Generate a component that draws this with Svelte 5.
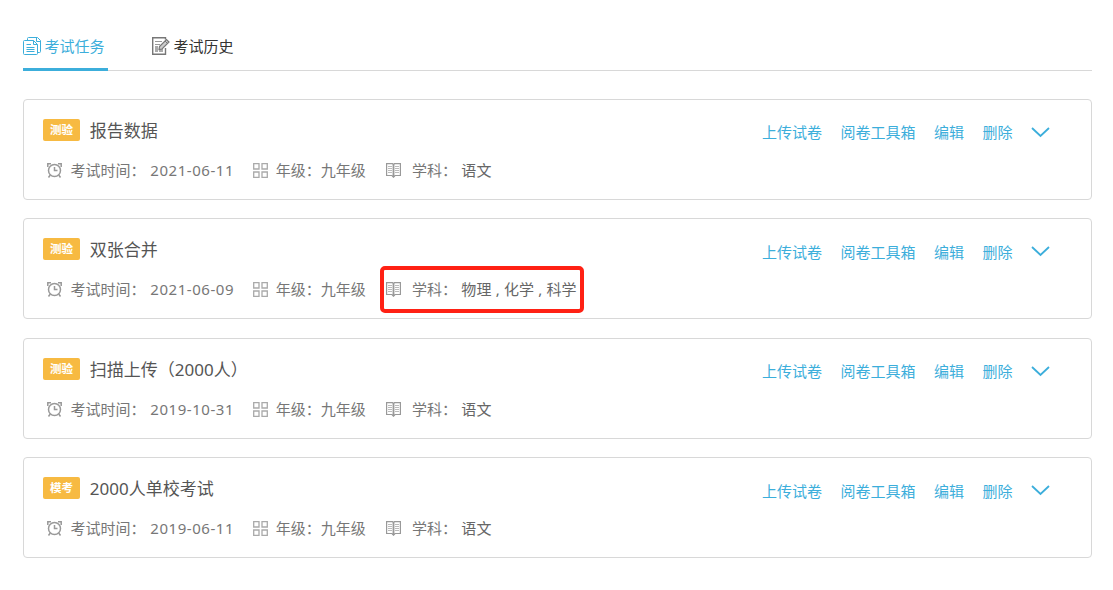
<script>
  const exams = [
    { tag: '测验', title: '报告数据', date: '2021-06-11', subjects: ['语文'] },
    { tag: '测验', title: '双张合并', date: '2021-06-09', subjects: ['物理', '化学', '科学'], marked: true },
    { tag: '测验', title: '扫描上传（2000人）', date: '2019-10-31', subjects: ['语文'] },
    { tag: '模考', title: '2000人单校考试', date: '2019-06-11', subjects: ['语文'] }
  ];
  const actions = ['上传试卷', '阅卷工具箱', '编辑', '删除'];
</script>

<main>
  <nav>
    <a class="tab active" href="#tasks">
      <svg width="19" height="19" viewBox="0 0 19 19" fill="none" stroke="currentColor">
        <path d="M4.5 3.5V1.5Q4.5 .5 5.5 .5H14.5L17.5 3.5V14.5Q17.5 15.5 16.5 15.5H14.5" />
        <path d="M1.5 3.5H10.5L14.5 7.5V16.5Q14.5 17.5 13.5 17.5H1.5Q.5 17.5 .5 16.5V4.5Q.5 3.5 1.5 3.5Z" />
        <path d="M10.5 3.5V7.5H14.5M13.5 .5V4.5H17.5M3.5 7.5H8M3.5 10.5H11.5M3.5 12.5H11.5M3.5 14.5H11.5" />
      </svg>
      <span>考试任务</span>
    </a>
    <a class="tab" href="#history">
      <svg width="18" height="18" viewBox="0 0 18 18" fill="none" stroke="#777">
        <path d="M13.5 11V17.3H.7V.7H13.5V2.5" stroke-width="1.4" />
        <path d="M3 4.5H10M3 7.5H8" stroke="#999" />
        <path d="M3 9H6V15H3ZM7 12H11V15H7Z" fill="#aaa" stroke="none" />
        <path d="M7.5 9.5L14.5 2.5L17 5L10 12L7 12.5Z" fill="#ccc" stroke-width="1.2" />
        <path d="M13 4L15.5 6.5" />
      </svg>
      <span>考试历史</span>
    </a>
  </nav>

  <section class="list">
    {#each exams as exam}
      <article>
        <header>
          <span class="tag">{exam.tag}</span>
          <h2>{exam.title}</h2>
          <div class="actions">
            {#each actions as action}
              <a href="#action">{action}</a>
            {/each}
            <svg width="19" height="11" viewBox="0 0 19 11" fill="none" stroke="currentColor" stroke-width="1.8">
              <path d="M1 1L9.5 9L18 1" />
            </svg>
          </div>
        </header>
        <div class="info">
          <svg class="clock" width="15" height="16" viewBox="0 -1 15 16" fill="none" stroke="#999" stroke-width="1.5">
            <circle cx="7.5" cy="7.5" r="6" />
            <path d="M7.5 4V7.5H10.5M.8 4V.8H4M11 .8H14.2V4M3.3 12L1.5 14.5M11.7 12L13.5 14.5" />
          </svg>
          <span>考试时间：</span>
          <span class="date">{exam.date}</span>
          <svg class="grid" width="15" height="16" viewBox="0 -1 15 16" fill="none" stroke="#aaa" stroke-width="1.3">
            <path d="M.7 .7H6V6H.7ZM9 .7H14.3V6H9ZM.7 9H6V14.3H.7ZM9 9H14.3V14.3H9Z" />
          </svg>
          <span class="grade">年级：九年级</span>
          <div class="subject">
            <svg width="15" height="16" viewBox="0 -1 15 16" fill="none" stroke="#999">
              <path d="M.6 .6H6.5L7.5 1.5L8.5 .6H14.4V12.5H9L7.5 14.2L6 12.5H.6Z" stroke-width="1.2" />
              <path d="M7.5 1V14" stroke-width="1.8" />
              <path d="M2 3.5H6M2 5.5H6M2 7.5H6M2 9.5H6M9 3.5H13M9 5.5H13M9 7.5H13M9 9.5H13" stroke="#bbb" />
            </svg>
            <span class="label">学科：</span>
            <span class="names">{exam.subjects.join(' , ')}</span>
            {#if exam.marked}<i class="mark"></i>{/if}
          </div>
        </div>
      </article>
    {/each}
  </section>
</main>

<style>
  :global(body) { background: #fff; }
  main {
    box-sizing: border-box;
    height: 590px;
    padding: 22px 21px 0 23px;
    font: 15px/22px "Noto Sans", "Noto Sans CJK SC", sans-serif;
    color: #777;
  }
  a { color: #3caedb; text-decoration: none; }
  svg { display: block; flex: none; }
  nav {
    display: flex;
    gap: 44px;
    box-sizing: border-box;
    height: 49px;
    border-bottom: 1px solid #d8d8d8;
  }
  .tab {
    display: flex;
    align-items: center;
    gap: 3.4px;
    box-sizing: border-box;
    width: 85px;
    height: 49px;
    padding-top: 2px;
    border-bottom: 3px solid transparent;
    color: #333;
    white-space: nowrap;
  }
  .tab.active { gap: 2.6px; color: #3caedb; border-color: #3caedb; }
  .tab span { flex: none; }
  .list {
    display: flex;
    flex-direction: column;
    gap: 18.4px;
    padding-top: 28px;
  }
  article {
    box-sizing: border-box;
    height: 101px;
    padding: 19px 41px 0 19px;
    border: 1px solid #d8d8d8;
    border-radius: 4px;
  }
  header { display: flex; align-items: center; height: 22px; }
  .tag {
    width: 37px;
    height: 22px;
    border-radius: 2px;
    background: #f7ba42;
    color: #fff;
    font-size: 11.5px;
    font-weight: 700;
    line-height: 21px;
    text-align: center;
  }
  h2 {
    margin: 0 0 0 9.8px;
    padding-top: 2px;
    font-size: 17px;
    font-weight: 400;
    color: #555;
  }
  .actions {
    display: flex;
    align-items: center;
    gap: 18.5px;
    margin-left: auto;
    padding-top: 4.8px;
    color: #3caedb;
  }
  .info { display: flex; align-items: center; height: 22px; padding: 18px 0 0 4px; }
  .clock { margin-right: 8.5px; }
  .date { width: 84px; margin: 0 19px 0 4.8px; letter-spacing: .55px; }
  .grid { margin-right: 7.5px; }
  .grade { margin-right: 20.2px; }
  .subject { position: relative; display: flex; align-items: center; }
  .label { margin-left: 11px; }
  .names { margin-left: 4.3px; letter-spacing: .15px; color: #666; white-space: pre; }
  .mark {
    position: absolute;
    inset: -12px -7px -13px -6.5px;
    border: 4px solid #ff2114;
    border-radius: 5px;
  }
</style>
